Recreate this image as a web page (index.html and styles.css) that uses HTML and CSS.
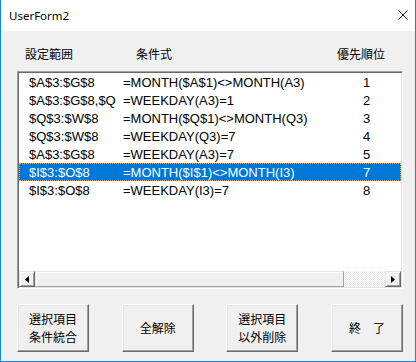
FILE: index.html
```html
<!DOCTYPE html>
<html lang="ja">
<head>
    <meta charset="UTF-8">
    <title>UserForm2</title>
    <link rel="stylesheet" href="styles.css">
</head>
<body>
    <div class="window">
        <!-- Title bar -->
        <div class="titlebar">
            <span class="title">UserForm2</span>
            <svg class="close" width="10" height="10" viewBox="0 0 10 10">
                <path d="M0.5 0.5 L9.5 9.5 M9.5 0.5 L0.5 9.5" stroke="#1a1a1a" stroke-width="1" fill="none"/>
            </svg>
        </div>

        <div class="form">
            <!-- Column labels -->
            <div class="labels">
                <span>設定範囲</span>
                <span>条件式</span>
                <span>優先順位</span>
            </div>

            <!-- List box -->
            <div class="listbox">
                <div class="list">
                    <div class="row"><span>$A$3:$G$8</span><span>=MONTH($A$1)&lt;&gt;MONTH(A3)</span><span>1</span></div>
                    <div class="row"><span>$A$3:$G$8,$Q</span><span>=WEEKDAY(A3)=1</span><span>2</span></div>
                    <div class="row"><span>$Q$3:$W$8</span><span>=MONTH($Q$1)&lt;&gt;MONTH(Q3)</span><span>3</span></div>
                    <div class="row"><span>$Q$3:$W$8</span><span>=WEEKDAY(Q3)=7</span><span>4</span></div>
                    <div class="row"><span>$A$3:$G$8</span><span>=WEEKDAY(A3)=7</span><span>5</span></div>
                    <div class="row selected"><span>$I$3:$O$8</span><span>=MONTH($I$1)&lt;&gt;MONTH(I3)</span><span>7</span></div>
                    <div class="row"><span>$I$3:$O$8</span><span>=WEEKDAY(I3)=7</span><span>8</span></div>
                </div>
                <div class="hscroll">
                    <div class="sb-btn">
                        <svg width="4" height="7" viewBox="0 0 4 7"><path d="M4 0 L0 3.5 L4 7 Z" fill="#000"/></svg>
                    </div>
                    <div class="sb-thumb"></div>
                    <div class="sb-track"></div>
                    <div class="sb-btn">
                        <svg width="4" height="7" viewBox="0 0 4 7"><path d="M0 0 L4 3.5 L0 7 Z" fill="#000"/></svg>
                    </div>
                </div>
            </div>

            <!-- Buttons -->
            <div class="buttons">
                <div class="btn">選択項目<br>条件統合</div>
                <div class="btn">全解除</div>
                <div class="btn">選択項目<br>以外削除</div>
                <div class="btn">終　了</div>
            </div>
        </div>
    </div>
</body>
</html>
```

FILE: styles.css
```css
/* Window */
body {
    margin: 0;
    background: #ffffff;
}
.window {
    width: 416px;
    height: 362px;
    box-sizing: border-box;
    border: 1px solid #1883d7;
    border-top: none;
    background: #f0f0f0;
    display: flex;
    flex-direction: column;
}
.titlebar {
    height: 31px;
    background: #ffffff;
    display: flex;
    align-items: center;
    justify-content: space-between;
    padding: 0 7px 0 8px;
    flex-shrink: 0;
}
.title {
    font-family: "Noto Sans", sans-serif;
    font-size: 11.5px;
    color: #000;
    margin-top: -1px;
}
.close {
    margin-right: 0;
    margin-top: -2px;
}

/* Form body */
.form {
    flex: 1;
    padding: 0 12px 0 16px;
    display: flex;
    flex-direction: column;
}
.labels {
    height: 40px;
    display: grid;
    grid-template-columns: 111px 201px auto;
    align-items: center;
    padding-left: 8px;
    padding-top: 5px;
    box-sizing: border-box;
    font-family: "Noto Sans CJK JP", sans-serif;
    font-size: 12px;
    color: #000;
}

/* List box */
.listbox {
    height: 218px;
    box-sizing: border-box;
    border-top: 1px solid #a0a0a0;
    border-left: 1px solid #a0a0a0;
    border-right: 1px solid #ffffff;
    border-bottom: 1px solid #ffffff;
    box-shadow: inset 1px 1px 0 #696969, inset -1px -1px 0 #e3e3e3;
    background: #ffffff;
    padding: 1px;
    display: flex;
    flex-direction: column;
}
.list {
    flex: 1;
}
.row {
    height: 18px;
    display: grid;
    grid-template-columns: 94px 240px auto;
    align-items: center;
    padding-left: 10px;
    font-family: "Liberation Sans", "Noto Sans CJK JP", sans-serif;
    font-size: 13px;
    color: #000;
    white-space: nowrap;
    box-sizing: border-box;
}
.row.selected {
    background: #0078d7;
    color: #ffffff;
    outline: 1px dotted #f0a050;
    outline-offset: -1px;
}

/* Horizontal scroll bar */
.hscroll {
    height: 16px;
    display: flex;
}
.sb-btn {
    width: 16px;
    height: 16px;
    box-sizing: border-box;
    background: #f0f0f0;
    border-top: 1px solid #e3e3e3;
    border-left: 1px solid #e3e3e3;
    border-right: 1px solid #696969;
    border-bottom: 1px solid #696969;
    box-shadow: inset 1px 1px 0 #ffffff, inset -1px -1px 0 #a0a0a0;
    display: flex;
    align-items: center;
    justify-content: center;
}
.sb-thumb {
    width: 309px;
    box-sizing: border-box;
    background: #f0f0f0;
    border-top: 1px solid #e3e3e3;
    border-left: 1px solid #e3e3e3;
    border-right: 1px solid #a0a0a0;
    border-bottom: 1px solid #a0a0a0;
    box-shadow: inset 1px 1px 0 #ffffff;
}
.sb-track {
    flex: 1;
    background: repeating-conic-gradient(#e8e8e8 0 25%, #ffffff 0 50%) 0 0 / 2px 2px;
}

/* Buttons */
.buttons {
    display: flex;
    justify-content: space-between;
    margin-top: 15px;
}
.btn {
    width: 72px;
    height: 48px;
    box-sizing: border-box;
    background: #f0f0f0;
    border-top: 1px solid #ffffff;
    border-left: 1px solid #ffffff;
    border-right: 1px solid #696969;
    border-bottom: 1px solid #696969;
    box-shadow: inset -1px -1px 0 #a0a0a0, inset 1px 1px 0 #e3e3e3;
    display: flex;
    align-items: center;
    justify-content: center;
    text-align: center;
    font-family: "Noto Sans CJK JP", sans-serif;
    font-size: 12px;
    line-height: 18px;
    color: #000;
}
```
